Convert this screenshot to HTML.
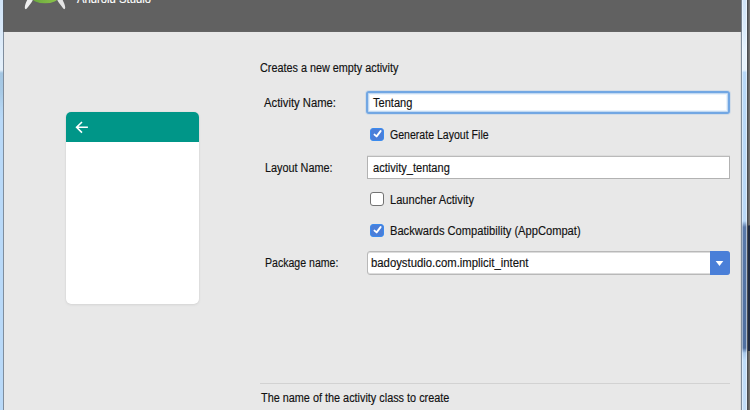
<!DOCTYPE html>
<html>
<head>
<meta charset="utf-8">
<style>
html,body{margin:0;padding:0;}
body{width:750px;height:410px;overflow:hidden;position:relative;background:#e8e8e8;font-family:"Liberation Sans",sans-serif;font-size:12px;color:#111;}
.t{-webkit-text-stroke:0.15px currentColor;}
.abs{position:absolute;}
.t{position:absolute;white-space:nowrap;line-height:14px;transform-origin:0 0;}
/* window frame */
#lf{left:0;top:0;width:3px;height:410px;background:linear-gradient(#d0e3f7 0,#e4f0fb 66px,#e4f0fb 70px,#a4c6e2 73px,#a8cae6 92px,#b4d5f2 108px,#b9d9f8 120px,#b9d9f8 410px);}
#lfl{left:3px;top:0;width:1px;height:410px;background:linear-gradient(#596068 0,#596068 32px,#7f8d9d 32px);}
#rfl{left:741px;top:0;width:1px;height:410px;background:linear-gradient(#77828f 0,#77828f 32px,#7f8d9d 32px);}
#rfl0{left:740px;top:32px;width:1px;height:378px;background:#dadada;}
#rfh{left:742px;top:0;width:5px;height:410px;box-sizing:border-box;border-left:1px solid rgba(255,255,255,0.45);border-right:1px solid rgba(255,255,255,0.5);}
#rf{left:742px;top:0;width:5px;height:410px;background:linear-gradient(#cfe3f7 0,#dcecfb 35px,#e6f2fd 50px,#e6f2fd 70px,#b8d8f8 72.5px,#bad9f8 221px,#5a7aaa 227px,#4f6f9f 348px,#a8c8ea 353px,#bfdcf8 360px,#c2ddf8 410px);}
#rfl2{left:747px;top:0;width:1px;height:410px;background:#4a4d52;}
#bg{left:748px;top:0;width:2px;height:410px;background:linear-gradient(#626262 0,#626262 225px,#1f2a40 226px,#1f2a40 351px,#66645e 351px,#606060 410px);}
#bg2{left:749px;top:0;width:1px;height:225px;background:#747474;}
#bg3{left:749px;top:351px;width:1px;height:59px;background:#767470;}
/* header */
#hdr{left:4px;top:0;width:737px;height:31px;background:#616161;}
#hdrline{left:4px;top:31px;width:737px;height:1px;background:#646464;}
/* card */
#card{left:66px;top:112px;width:133px;height:192px;background:#fff;border-radius:5px;box-shadow:0 0 1px rgba(0,0,0,0.12),0 1px 3px rgba(0,0,0,0.08);overflow:hidden;}
#cardbar{left:0;top:0;width:133px;height:30px;background:#009688;}
/* fields */
.field{position:absolute;background:#fff;box-sizing:border-box;}
.cb{position:absolute;width:14px;height:13px;box-sizing:border-box;border-radius:3px;}
</style>
</head>
<body>
<div id="lf" class="abs"></div>
<div id="lfl" class="abs"></div>
<div id="rfl" class="abs"></div>
<div id="rfl0" class="abs"></div>
<div id="rf" class="abs"></div>
<div id="rfh" class="abs"></div>
<div id="rfl2" class="abs"></div>
<div id="bg" class="abs"></div>
<div id="bg2" class="abs"></div>
<div id="bg3" class="abs"></div>

<div id="hdr" class="abs">
  <svg class="abs" style="left:-4px;top:0" width="90" height="31" viewBox="0 0 90 31">
    <defs><linearGradient id="gh" x1="0" x2="1" y1="0" y2="0"><stop offset="0" stop-color="#69a83e"/><stop offset="1" stop-color="#8cc44a"/></linearGradient></defs>
    <ellipse cx="45" cy="-3" rx="13.5" ry="6.3" fill="url(#gh)"/>
    <path d="M27.2,0 L32.8,0 C32,1.8 30.5,4 28.6,6.2 C27.5,7.5 26.8,8.8 26,9.1 C25.2,9.3 24.8,8.6 24.8,7.6 C24.8,5.5 25.8,2.8 27.2,0 Z" fill="#efefef"/>
    <path d="M57.3,0 L62.7,0 C63.8,2.5 65.2,5 65.2,7.6 C65.2,8.6 64.8,9.3 64.1,9.1 C63.3,8.8 62.6,7.5 61.6,6.2 C59.7,4 58.2,1.8 57.3,0 Z" fill="#e4e4e4"/>
  </svg>
  <div class="t" style="left:73px;top:-8px;color:#fff;transform:scaleX(0.94)">Android Studio</div>
</div>
<div id="hdrline" class="abs"></div>

<div id="card" class="abs">
  <div id="cardbar" class="abs">
    <svg class="abs" style="left:8px;top:8px" width="16" height="16" viewBox="0 0 16 16"><path d="M2.6 7.3 L13.9 7.3 M8 2.0 L2.6 7.3 L8 12.6" fill="none" stroke="#fff" stroke-width="1.6"/></svg>
  </div>
</div>


<!-- Activity name field (focused) -->
<div class="field" style="left:366px;top:91px;width:364px;height:23px;border:2px solid #72a7e3;border-radius:3px;box-shadow:inset 0 0 0 1px #c2d9f2,inset 0 0 0 2px #eaf3fc,0 0 0 1px rgba(112,165,229,0.18);"></div>
<!-- Generate Layout File checkbox -->
<div class="cb" style="left:370px;top:128px;background:#4a7ed9;border:1px solid #3a8bef;">
  <svg class="abs" style="left:-1px;top:-1px" width="14" height="14" viewBox="0 0 14 14"><path d="M4.5 6.6 L6.6 8.4 L10.6 3.1" fill="none" stroke="#fff" stroke-width="1.9" stroke-linecap="round" stroke-linejoin="round"/></svg>
</div>
<!-- Layout name field -->
<div class="field" style="left:367px;top:156px;width:363px;height:23px;border:1px solid #b2b2b2;border-top-color:#bababa;box-shadow:0 -1px 0 rgba(0,0,0,0.05);"></div>
<!-- Launcher Activity checkbox -->
<div class="cb" style="left:370px;top:192px;height:14px;background:#fff;border:1.7px solid #737373;"></div>
<!-- Backwards compat checkbox -->
<div class="cb" style="left:370px;top:224px;background:#4a7ed9;border:1px solid #3a8bef;">
  <svg class="abs" style="left:-1px;top:-1px" width="14" height="14" viewBox="0 0 14 14"><path d="M4.5 6.6 L6.6 8.4 L10.6 3.1" fill="none" stroke="#fff" stroke-width="1.9" stroke-linecap="round" stroke-linejoin="round"/></svg>
</div>
<!-- Package combo -->
<div class="field" style="left:367px;top:251px;width:363px;height:24px;border:1px solid #b8b8b8;border-radius:3px;box-shadow:inset 0 1px 0 #dcdcdc,inset 0 -1px 0 #dcdcdc;"></div>
<div class="abs" style="left:710px;top:251px;width:20px;height:24px;background:#4a7fd8;border-radius:0 3px 3px 0;">
  <svg class="abs" style="left:0;top:0" width="20" height="24" viewBox="0 0 20 24"><path d="M5.7 10 L13.3 10 L9.5 15 Z" fill="#fff"/></svg>
</div>
<!-- separator -->
<div class="abs" style="left:260px;top:383px;width:470px;height:1px;background:#d2d2d2;"></div>

<div class="t" style="left:260px;top:61px;transform:scaleX(0.902)">Creates a new empty activity</div>
<div class="t" style="left:264.3px;top:96px;transform:scaleX(0.938)">Activity Name:</div>
<div class="t" style="left:372.9px;top:96px;transform:scaleX(0.923)">Tentang</div>
<div class="t" style="left:390.2px;top:128px;transform:scaleX(0.880)">Generate Layout File</div>
<div class="t" style="left:264.9px;top:161px;transform:scaleX(0.904)">Layout Name:</div>
<div class="t" style="left:372.6px;top:161px;transform:scaleX(0.921)">activity_tentang</div>
<div class="t" style="left:390px;top:193px;transform:scaleX(0.926)">Launcher Activity</div>
<div class="t" style="left:390px;top:224px;transform:scaleX(0.928)">Backwards Compatibility (AppCompat)</div>
<div class="t" style="left:264.7px;top:256px;transform:scaleX(0.880)">Package name:</div>
<div class="t" style="left:371px;top:256px;transform:scaleX(0.944)">badoystudio.com.implicit_intent</div>
<div class="t" style="left:260.5px;top:391px;transform:scaleX(0.905)">The name of the activity class to create</div>
</body>
</html>
